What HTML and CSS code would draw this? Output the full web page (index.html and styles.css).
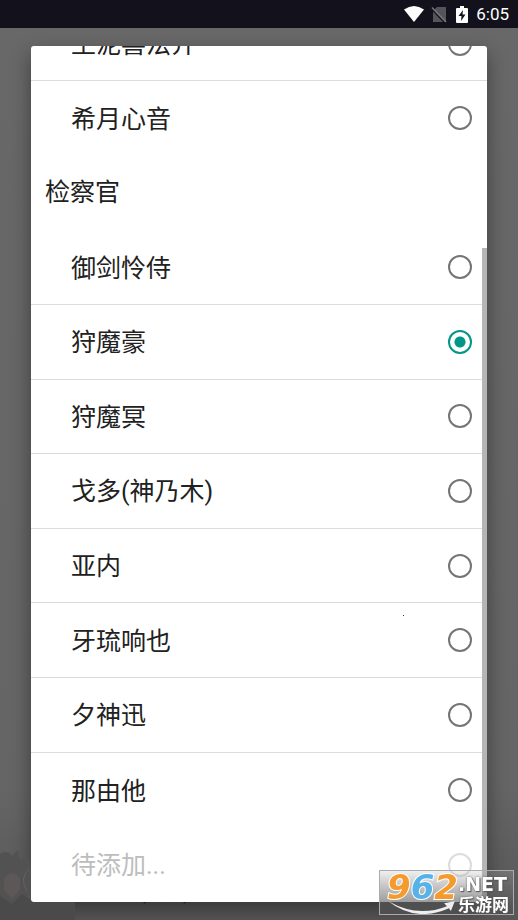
FILE: index.html
```
<!DOCTYPE html>
<html lang="zh-CN">
<head>
<meta charset="utf-8">
<meta name="viewport" content="width=device-width, initial-scale=1">
<title>选择角色</title>
<link rel="stylesheet" href="styles.css">
</head>
<body>
<header class="status">
  <svg class="wifi" viewBox="0 0 20 16" aria-hidden="true"><path d="M0 3.5Q10-3.5 20 3.5L10 16Z"/></svg>
  <svg class="sim" viewBox="0 0 16 17" aria-hidden="true"><path class="card" d="M6 1h9v15H2V5z"/><path class="gap" d="M0 2.5 14 17"/><path class="slash" d="M1 1.5 15 16"/></svg>
  <svg class="battery" viewBox="0 0 12 17" aria-hidden="true"><path d="M4 0h4v2h3q1 0 1 1v13q0 1-1 1H1q-1 0-1-1V3q0-1 1-1h3z"/><path class="bolt" d="M7 4 2.5 10H5.5L5 15 9.5 8.5H6.5z"/></svg>
  <time>6:05</time>
</header>
<main class="stage">
  <svg class="art" viewBox="0 0 75 80" aria-hidden="true">
    <path class="hair" d="M0 14q7-5 12 2l6-6 2 10 8-4 4 12 8-3v55H0z"/>
    <path class="face" d="M4 38q9-9 16 0v12l-8 9-8-9z"/>
    <path class="coat" d="M0 56l12 8 10-10 12 8 12-12 14 9 15-2v23H0z"/>
    <path class="line" d="M29 29q-10 9-2 22M43 30q8 12 3 25"/>
  </svg>
  <p class="behind">狩魔(一,狩),共可完整是人审判官 对</p>
  <form class="dialog">
    <label class="row clipped"><span>王泥喜法介</span><input type="radio" name="role"></label>
    <label class="row"><span>希月心音</span><input type="radio" name="role"></label>
    <h2 class="group">检察官</h2>
    <label class="row line"><span>御剑怜侍</span><input type="radio" name="role"></label>
    <label class="row line"><span>狩魔豪</span><input type="radio" name="role" checked></label>
    <label class="row line"><span>狩魔冥</span><input type="radio" name="role"></label>
    <label class="row line"><span>戈多(神乃木)</span><input type="radio" name="role"></label>
    <label class="row line"><span>亚内</span><input type="radio" name="role"></label>
    <label class="row line"><span>牙琉响也</span><input type="radio" name="role"></label>
    <label class="row line"><span>夕神迅</span><input type="radio" name="role"></label>
    <label class="row"><span>那由他</span><input type="radio" name="role"></label>
    <label class="row disabled"><span>待添加...</span><input type="radio" name="role" disabled></label>
    <i class="thumb"></i>
    <i class="speck"></i>
  </form>
</main>
<aside class="mark">
  <svg class="swoosh" viewBox="0 0 135 44" aria-hidden="true"><path d="M8 31Q38 48 68 36l-3-3 11-2-4 10-2-3Q36 53 8 31z"/></svg>
  <b class="digits"><span class="orange">9</span><span class="blue">6</span><span class="orange">2</span></b>
  <span class="site"><b class="net">.NET</b><b class="name">乐游网</b></span>
</aside>
</body>
</html>
```
FILE: styles.css
```
* { box-sizing: border-box; }
body {
  margin: 0;
  height: 100vh;
  display: flex;
  flex-direction: column;
  overflow: hidden;
  background: #656565;
  color: #212121;
  font-family: Roboto, "Noto Sans CJK SC", sans-serif;
}
.status {
  flex: none;
  height: 28px;
  padding: 0 9px 0 0;
  display: flex;
  align-items: center;
  justify-content: flex-end;
  background: #13121c;
  color: #fff;
  font-size: 17px;
  font-weight: 400;
}
.status svg { fill: #fff; }
.wifi { width: 20px; height: 16px; margin-right: 7px; }
.sim { width: 16px; height: 17px; margin-right: 9px; }
.sim .card { fill: #55545b; }
.sim .gap { stroke: #13121c; stroke-width: 1.5; }
.sim .slash { stroke: #77767c; stroke-width: 1.5; }
.battery { width: 12px; height: 17px; margin-right: 8px; }
.status .bolt { fill: #13121c; }
.stage {
  position: relative;
  flex: 1;
  min-height: 0;
  display: flex;
  padding: 18px 31px 18px;
  background: linear-gradient(#686868, #656565 85%, #575757);
}
.dialog {
  position: relative;
  flex: 1;
  display: grid;
  grid-template-rows: 35px repeat(11, minmax(0, 1fr));
  overflow: hidden;
  border-radius: 3px;
  background: #fff;
}
.stage::before {
  content: "";
  position: absolute;
  inset: 18px 31px;
  border-radius: 3px;
  box-shadow: 0 8px 20px rgba(0, 0, 0, .4);
}
.row {
  display: flex;
  align-items: center;
  justify-content: space-between;
  min-height: 0;
  padding: 0 15px 0 40px;
  font-size: 25px;
  line-height: 30px;
}
.row span { padding-top: 3px; }
.line, .clipped { border-bottom: 1px solid #dcdcdc; }
.clipped { align-items: flex-end; padding-bottom: 24px; }
.clipped span { margin-bottom: -4px; }
.group {
  margin: 0;
  padding-left: 14px;
  display: flex;
  align-items: center;
  font-size: 25px;
  line-height: 30px;
  font-weight: 400;
}
.row input {
  appearance: none;
  flex: none;
  width: 24px;
  height: 24px;
  margin: 0;
  border: 2px solid #757575;
  border-radius: 50%;
}
.row input:checked {
  border-color: #009688;
  background: radial-gradient(circle, #009688 5px, transparent 6px);
}
.disabled { color: #bdbdbd; }
.row.disabled input { border-color: #dcdcdc; }
.thumb {
  position: absolute;
  top: 202px;
  right: 0;
  bottom: 0;
  width: 5px;
  background: #b5b5b5;
}
.speck {
  position: absolute;
  left: 372px;
  top: 569px;
  width: 1px;
  height: 1px;
  background: #333;
}
.art {
  position: absolute;
  left: 0;
  bottom: 0;
  width: 75px;
  height: 80px;
}
.hair { fill: #535252; }
.face { fill: #5d5757; }
.coat { fill: #4b4a4b; }
.art .line { fill: none; stroke: #646363; border: 0; }
.behind {
  position: absolute;
  left: 106px;
  bottom: 16px;
  margin: 0;
  font-size: 17px;
  line-height: 20px;
  white-space: nowrap;
  color: #111;
}
.mark {
  position: fixed;
  right: 4px;
  bottom: 5px;
  width: 135px;
  height: 45px;
  display: flex;
  border: 1px solid #ababab;
  background: linear-gradient(rgba(190, 190, 190, .25), rgba(80, 80, 80, .75));
  color: #fff;
}
.swoosh { position: absolute; inset: 0; width: 100%; height: 100%; fill: #eee; }
.digits {
  position: relative;
  width: 78px;
  padding-left: 7px;
  font: italic 700 34px/32px "DejaVu Sans", sans-serif;
  -webkit-text-stroke: 2px #fff;
  paint-order: stroke;
}
.orange { color: #f59a2c; }
.blue { color: #57b2e8; }
.site {
  position: relative;
  display: flex;
  flex-direction: column;
  text-shadow: 1px 1px 1px #555, 0 0 2px #555;
}
.net { font: 700 19px/27px "DejaVu Sans", sans-serif; }
.name { font-size: 17px; line-height: 15px; }
```
